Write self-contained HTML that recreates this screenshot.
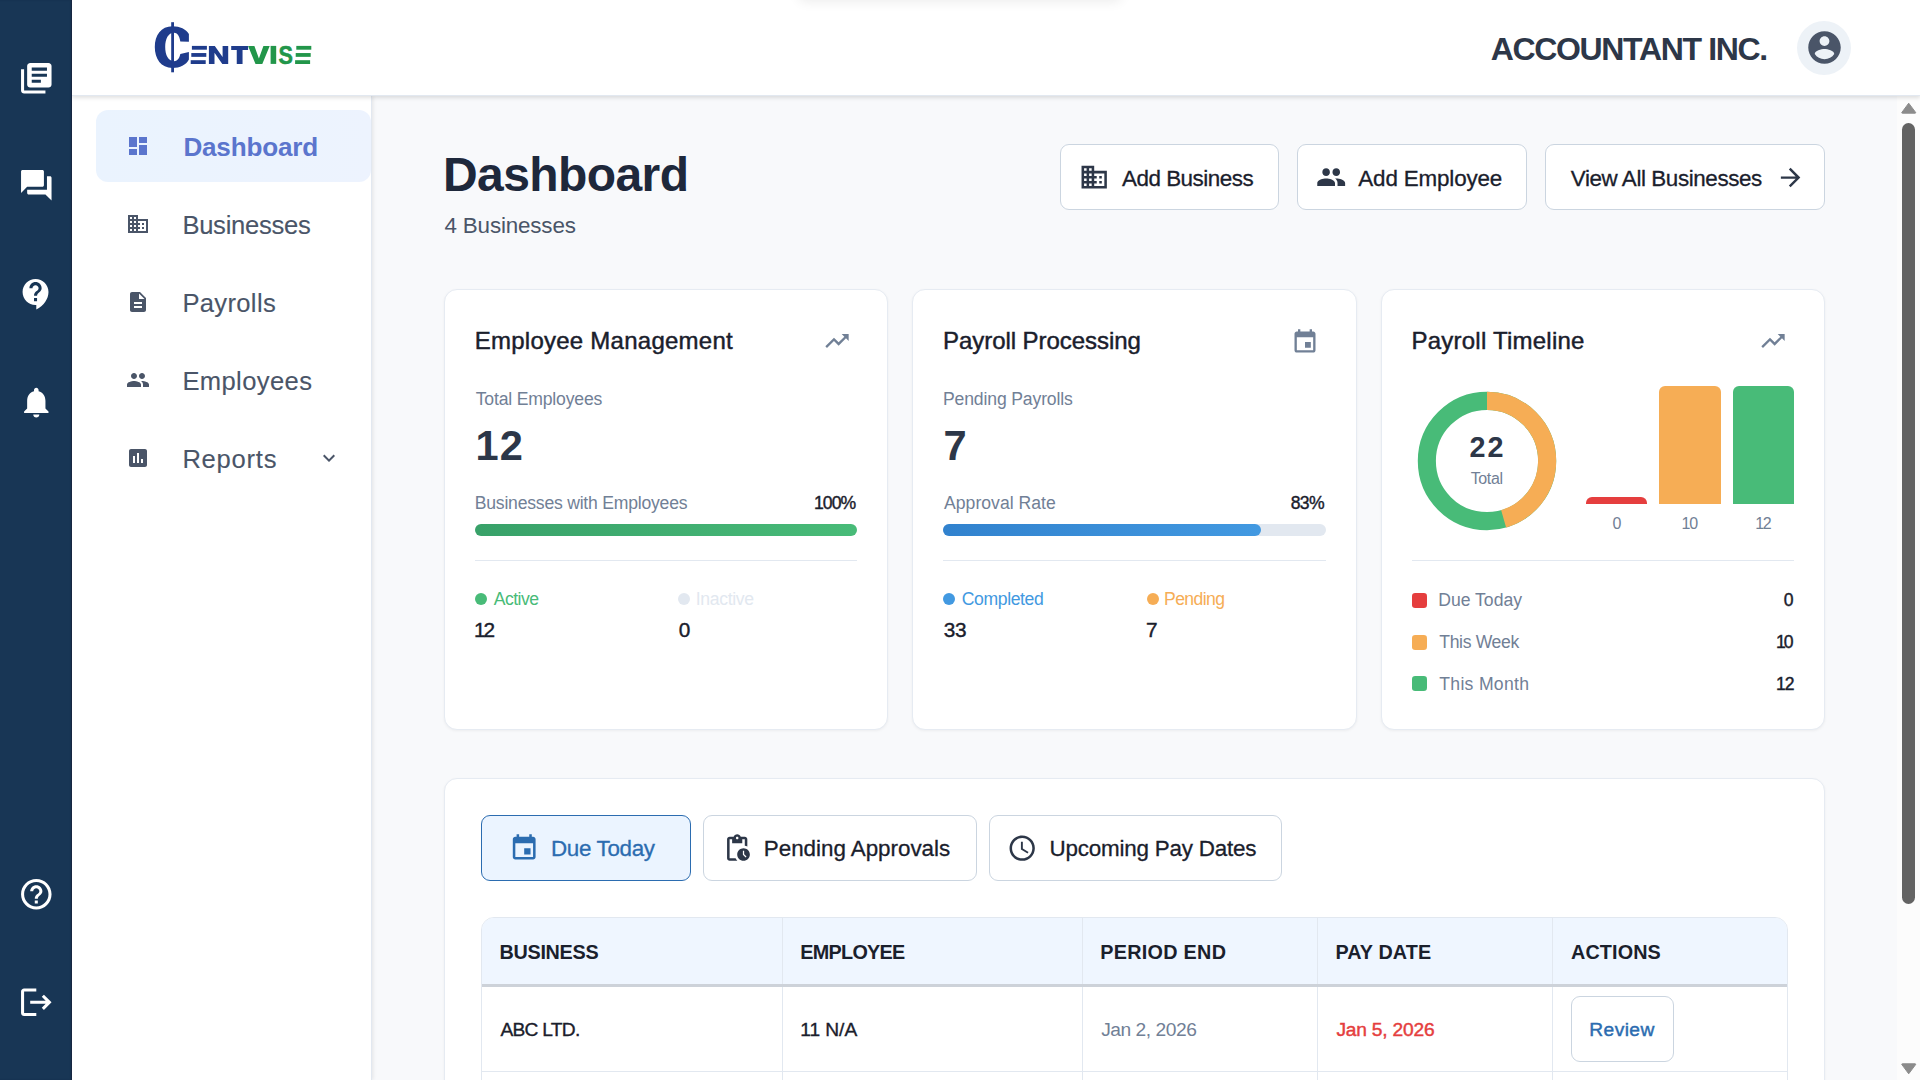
<!DOCTYPE html>
<html lang="en"><head><meta charset="utf-8"><title>Centvise Dashboard</title>
<style>
*{box-sizing:border-box;margin:0;padding:0}
html,body{width:1920px;height:1080px;overflow:hidden;background:#f8f9fb;font-family:"Liberation Sans",sans-serif}
.t{position:absolute;white-space:nowrap;line-height:1;display:block}
.i{position:absolute;display:block}
.abs{position:absolute}
#rail{position:absolute;left:0;top:0;width:72px;height:1080px;background:#183655;box-shadow:inset -1.5px 0 1.5px -0.5px rgba(20,14,30,.45);z-index:5}
#top{position:absolute;left:72px;top:0;width:1848px;height:96px;background:#fff;border-bottom:1px solid #e2e8f0;box-shadow:0 2px 4px rgba(0,0,0,.12);z-index:4}
#side{position:absolute;left:72px;top:96px;width:300px;height:984px;background:#fff;border-right:1px solid #e2e8f0;box-shadow:1px 0 4px rgba(0,0,0,.09);z-index:3}
#main{position:absolute;left:372px;top:96px;width:1525px;height:984px;background:#f8f9fb;z-index:1}
#sb{position:absolute;left:1897px;top:96px;width:23px;height:984px;background:#fcfcfc;z-index:2}
.navact{position:absolute;left:96px;top:110px;width:275px;height:72px;border-radius:12px;background:linear-gradient(90deg,#eaf3fe,#edf3fe)}
.btn{position:absolute;background:#fff;border:1px solid #cbd5e0;border-radius:9px}
.card{position:absolute;background:#fff;border:1px solid #e6ebf2;border-radius:13px;box-shadow:0 1px 3px rgba(0,0,0,.05)}
.hr{position:absolute;height:1px;background:#e2e8f0}
.dot{position:absolute;width:12px;height:12px;border-radius:50%}
.sq{position:absolute;width:15.2px;height:15.2px;border-radius:3.2px}
.bar{position:absolute;border-radius:6px}
</style></head>
<body>
<nav id="rail">
<svg class="i" style="left:17.70px;top:59.70px" width="36.6" height="36.6" viewBox="0 0 24 24" fill="#fff"><path d="M4 6H2v14c0 1.1.9 2 2 2h14v-2H4V6zm16-4H8c-1.1 0-2 .9-2 2v12c0 1.1.9 2 2 2h12c1.1 0 2-.9 2-2V4c0-1.1-.9-2-2-2zm-1 9H9V9h10v2zm-4 4H9v-2h6v2zm4-8H9V5h10v2z"/></svg>
<svg class="i" style="left:17.70px;top:167.45px" width="36.6" height="36.6" viewBox="0 0 24 24" fill="#fff"><path d="M21 6h-2v9H6v2c0 .55.45 1 1 1h11l4 4V7c0-.55-.45-1-1-1zm-4 6V3c0-.55-.45-1-1-1H3c-.55 0-1 .45-1 1v14l4-4h10c.55 0 1-.45 1-1z"/></svg>
<svg class="i" style="left:17.70px;top:275.70px" width="36.6" height="36.6" viewBox="0 0 24 24" fill="#fff"><path d="M11.5 2C6.81 2 3 5.81 3 10.5S6.81 19 11.5 19h.5v3c4.86-2.34 8-7 8-11.5C20 5.81 16.19 2 11.5 2zm1 14.5h-2v-2h2v2zm0-3.5h-2c0-3.25 3-3 3-5 0-1.1-.9-2-2-2s-2 .9-2 2h-2c0-2.21 1.79-4 4-4s4 1.79 4 4c0 2.5-3 2.75-3 5z"/></svg>
<svg class="i" style="left:17.70px;top:383.70px" width="36.6" height="36.6" viewBox="0 0 24 24" fill="#fff"><path d="M12 22c1.1 0 2-.9 2-2h-4c0 1.1.89 2 2 2zm6-6v-5c0-3.07-1.64-5.64-4.5-6.32V4c0-.83-.67-1.5-1.5-1.5s-1.5.67-1.5 1.5v.68C7.63 5.36 6 7.92 6 11v5l-2 2v1h16v-1l-2-2z"/></svg>
<svg class="i" style="left:17.70px;top:875.70px" width="36.6" height="36.6" viewBox="0 0 24 24" fill="#fff"><path d="M11 18h2v-2h-2v2zm1-16C6.48 2 2 6.48 2 12s4.48 10 10 10 10-4.48 10-10S17.52 2 12 2zm0 18c-4.41 0-8-3.59-8-8s3.59-8 8-8 8 3.59 8 8-3.59 8-8 8zm0-14c-2.21 0-4 1.79-4 4h2c0-1.1.9-2 2-2s2 .9 2 2c0 2-3 1.75-3 5h2c0-2.25 3-2.5 3-5 0-2.21-1.79-4-4-4z"/></svg>
<svg class="i" style="left:17.70px;top:983.70px" width="36.6" height="36.6" viewBox="0 0 24 24" fill="#fff"><path d="M17 7l-1.41 1.41L18.17 11H8v2h10.17l-2.58 2.58L17 17l5-5zM4 5h8V3H4c-1.1 0-2 .9-2 2v14c0 1.1.9 2 2 2h8v-2H4V5z"/></svg>
</nav>
<header id="top"></header>
<div class="abs" style="z-index:6;left:0;top:0">
<svg class="i" style="left:150px;top:18px" width="170" height="60" viewBox="0 0 170 60"><g transform="translate(-150,-18)"><path fill="#1f3c8c" d="M188.9 41.7L188.9 34C186 29 180 26.2 172.5 26.2C161 26.2 154.8 35 154.8 47.1C154.8 59 161 68 172.5 68C180 68 186 65 188.9 59.5L188.9 52L180.3 54C179.5 58.5 177.2 61.2 174 61.2C168.2 61.2 165.2 55 165.2 47.1C165.2 39 168.2 32.8 174 32.8C177.2 32.8 179.5 36 180.3 41.4Z"/></g><rect x="21.20" y="4.20" width="2.80" height="50.10" fill="#1f3c8c"/><rect x="41.90" y="27.90" width="15.00" height="3.80" fill="#1f3c8c"/><rect x="41.30" y="35.05" width="15.00" height="3.80" fill="#1f3c8c"/><rect x="40.70" y="42.20" width="15.00" height="3.80" fill="#1f3c8c"/><polygon fill="#1f3c8c" points="58.90,45.90 58.90,27.90 64.80,27.90 72.60,39.00 72.60,27.90 78.20,27.90 78.20,45.90 72.30,45.90 64.50,34.80 64.50,45.90"/><polygon fill="#1f3c8c" points="81.20,27.90 98.10,27.90 98.10,32.10 92.55,32.10 92.55,45.90 86.75,45.90 86.75,32.10 81.20,32.10"/><polygon fill="#22964a" points="98.10,27.90 104.40,27.90 108.90,40.60 113.40,27.90 119.70,27.90 112.30,45.90 105.50,45.90"/><polygon fill="#22964a" points="120.60,27.90 126.20,27.90 126.20,45.90 120.60,45.90"/><text transform="translate(128.60,45.90) scale(0.86,1)" font-family="Liberation Sans" font-weight="700" font-size="25.2" fill="#22964a" stroke="#22964a" stroke-width="0.5">S</text><rect x="146.30" y="27.90" width="15.00" height="3.80" fill="#22964a"/><rect x="145.70" y="35.05" width="15.00" height="3.80" fill="#22964a"/><rect x="145.10" y="42.20" width="15.00" height="3.80" fill="#22964a"/></svg>
<span class="t" style="left:1490.75px;top:32.71px;font-size:32px;color:#2d3748;font-weight:700;letter-spacing:-1.348px;">ACCOUNTANT INC.</span>
<div class="abs" style="left:1797px;top:21px;width:54px;height:54px;border-radius:50%;background:#edf2f7"></div>
<svg class="i" style="left:1804.80px;top:28.40px" width="39" height="39" viewBox="0 0 24 24" fill="#4a5568"><path d="M12 2C6.48 2 2 6.48 2 12s4.48 10 10 10 10-4.48 10-10S17.52 2 12 2zm0 3c1.66 0 3 1.34 3 3s-1.34 3-3 3-3-1.34-3-3 1.34-3 3-3zm0 14.2c-2.5 0-4.71-1.28-6-3.22.03-1.99 4-3.08 6-3.08 1.99 0 5.97 1.09 6 3.08-1.29 1.94-3.5 3.22-6 3.22z"/></svg>
</div>
<aside id="side"></aside>
<div class="abs" style="z-index:6;left:0;top:0">
<div class="navact"></div>
<svg class="i" style="left:126.00px;top:134.00px" width="24" height="24" viewBox="0 0 24 24" fill="#5b75cd"><path d="M3 13h8V3H3v10zm0 8h8v-6H3v6zm10 0h8V11h-8v10zm0-18v6h8V3h-8z"/></svg>
<span class="t" style="left:183.40px;top:133.61px;font-size:26.1px;color:#5b75cd;font-weight:700;letter-spacing:-0.194px;">Dashboard</span>
<svg class="i" style="left:126.00px;top:212.00px" width="24" height="24" viewBox="0 0 24 24" fill="#4a5568"><path d="M12 7V3H2v18h20V7H12zM6 19H4v-2h2v2zm0-4H4v-2h2v2zm0-4H4V9h2v2zm0-4H4V5h2v2zm4 12H8v-2h2v2zm0-4H8v-2h2v2zm0-4H8V9h2v2zm0-4H8V5h2v2zm10 12h-8v-2h2v-2h-2v-2h2v-2h-2V9h8v10zm-2-8h-2v2h2v-2zm0 4h-2v2h2v-2z"/></svg>
<span class="t" style="left:182.40px;top:212.53px;font-size:25.6px;color:#4a5568;letter-spacing:-0.287px;-webkit-text-stroke:0.12px #4a5568;">Businesses</span>
<svg class="i" style="left:126.00px;top:290.00px" width="24" height="24" viewBox="0 0 24 24" fill="#4a5568"><path d="M14 2H6c-1.1 0-1.99.9-1.99 2L4 20c0 1.1.89 2 1.99 2H18c1.1 0 2-.9 2-2V8l-6-6zm2 16H8v-2h8v2zm0-4H8v-2h8v2zm-3-5V3.5L18.5 9H13z"/></svg>
<span class="t" style="left:182.40px;top:290.53px;font-size:25.6px;color:#4a5568;letter-spacing:0.324px;-webkit-text-stroke:0.12px #4a5568;">Payrolls</span>
<svg class="i" style="left:126.00px;top:368.00px" width="24" height="24" viewBox="0 0 24 24" fill="#4a5568"><path d="M16 11c1.66 0 2.99-1.34 2.99-3S17.66 5 16 5c-1.66 0-3 1.34-3 3s1.34 3 3 3zm-8 0c1.66 0 2.99-1.34 2.99-3S9.66 5 8 5C6.34 5 5 6.34 5 8s1.34 3 3 3zm0 2c-2.33 0-7 1.17-7 3.5V19h14v-2.5c0-2.33-4.67-3.5-7-3.5zm8 0c-.29 0-.62.02-.97.05 1.16.84 1.97 1.97 1.97 3.45V19h6v-2.5c0-2.33-4.67-3.5-7-3.5z"/></svg>
<span class="t" style="left:182.40px;top:368.53px;font-size:25.6px;color:#4a5568;letter-spacing:0.368px;-webkit-text-stroke:0.12px #4a5568;">Employees</span>
<svg class="i" style="left:126.00px;top:446.00px" width="24" height="24" viewBox="0 0 24 24" fill="#4a5568"><path d="M19 3H5c-1.1 0-2 .9-2 2v14c0 1.1.9 2 2 2h14c1.1 0 2-.9 2-2V5c0-1.1-.9-2-2-2zM9 17H7v-7h2v7zm4 0h-2V7h2v10zm4 0h-2v-4h2v4z"/></svg>
<span class="t" style="left:182.40px;top:446.53px;font-size:25.6px;color:#4a5568;letter-spacing:0.739px;-webkit-text-stroke:0.12px #4a5568;">Reports</span>
<svg class="i" style="left:317.00px;top:446.00px" width="24" height="24" viewBox="0 0 24 24" fill="#4a5568"><path d="M16.59 8.59L12 13.17 7.41 8.59 6 10l6 6 6-6z"/></svg>
</div>
<main id="main"></main>
<div class="abs" style="left:0;top:0;z-index:2">
<span class="t" style="left:443.00px;top:150.77px;font-size:48px;color:#1e283b;font-weight:700;letter-spacing:-0.586px;">Dashboard</span>
<span class="t" style="left:444.50px;top:215.04px;font-size:22.4px;color:#4a5568;letter-spacing:-0.162px;">4 Businesses</span>
<div class="btn" style="left:1060px;top:144px;width:219px;height:66px"></div>
<svg class="i" style="left:1078.60px;top:161.80px" width="30.4" height="30.4" viewBox="0 0 24 24" fill="#2d3748"><path d="M12 7V3H2v18h20V7H12zM6 19H4v-2h2v2zm0-4H4v-2h2v2zm0-4H4V9h2v2zm0-4H4V5h2v2zm4 12H8v-2h2v2zm0-4H8v-2h2v2zm0-4H8V9h2v2zm0-4H8V5h2v2zm10 12h-8v-2h2v-2h-2v-2h2v-2h-2V9h8v10zm-2-8h-2v2h2v-2zm0 4h-2v2h2v-2z"/></svg>
<span class="t" style="left:1122.00px;top:167.94px;font-size:22.4px;color:#1a202c;letter-spacing:-0.483px;-webkit-text-stroke:0.3px #1a202c;">Add Business</span>
<div class="btn" style="left:1297px;top:144px;width:230px;height:66px"></div>
<svg class="i" style="left:1315.80px;top:161.80px" width="30.4" height="30.4" viewBox="0 0 24 24" fill="#2d3748"><path d="M16 11c1.66 0 2.99-1.34 2.99-3S17.66 5 16 5c-1.66 0-3 1.34-3 3s1.34 3 3 3zm-8 0c1.66 0 2.99-1.34 2.99-3S9.66 5 8 5C6.34 5 5 6.34 5 8s1.34 3 3 3zm0 2c-2.33 0-7 1.17-7 3.5V19h14v-2.5c0-2.33-4.67-3.5-7-3.5zm8 0c-.29 0-.62.02-.97.05 1.16.84 1.97 1.97 1.97 3.45V19h6v-2.5c0-2.33-4.67-3.5-7-3.5z"/></svg>
<span class="t" style="left:1358.30px;top:167.94px;font-size:22.4px;color:#1a202c;letter-spacing:-0.152px;-webkit-text-stroke:0.3px #1a202c;">Add Employee</span>
<div class="btn" style="left:1545px;top:144px;width:280px;height:66px"></div>
<span class="t" style="left:1570.75px;top:167.94px;font-size:22.4px;color:#1a202c;letter-spacing:-0.403px;-webkit-text-stroke:0.3px #1a202c;">View All Businesses</span>
<svg class="i" style="left:1776.40px;top:162.65px" width="29.2" height="29.2" viewBox="0 0 24 24" fill="#2d3748"><path d="M12 4l-1.41 1.41L16.17 11H4v2h12.17l-5.58 5.59L12 20l8-8z"/></svg>
<section class="card" style="left:444px;top:289px;width:444px;height:441px"></section>
<span class="t" style="left:474.75px;top:329.13px;font-size:24px;color:#1a202c;letter-spacing:0.247px;-webkit-text-stroke:0.45px #1a202c;">Employee Management</span>
<svg class="i" style="left:822.50px;top:327.20px" width="28" height="28" viewBox="0 0 24 24" fill="#718096"><path d="M16 6l2.29 2.29-4.88 4.88-4-4L2 16.59 3.41 18l6-6 4 4 6.3-6.29L22 12V6z"/></svg>
<span class="t" style="left:475.75px;top:390.80px;font-size:17.6px;color:#718096;letter-spacing:-0.181px;">Total Employees</span>
<span class="t" style="left:475.50px;top:424.99px;font-size:41.6px;color:#2d3748;font-weight:700;letter-spacing:1.118px;">12</span>
<span class="t" style="left:474.75px;top:494.55px;font-size:17.6px;color:#718096;letter-spacing:-0.220px;">Businesses with Employees</span>
<span class="t" style="left:814.00px;top:494.55px;font-size:17.6px;color:#1a202c;letter-spacing:-0.951px;-webkit-text-stroke:0.4px #1a202c;">100%</span>
<div class="abs" style="left:475px;top:524px;width:382px;height:12px;border-radius:6px;background:linear-gradient(90deg,#38a169,#48bb78)"></div>
<div class="hr" style="left:475px;top:560px;width:382px"></div>
<div class="dot" style="left:475px;top:593px;background:#48bb78"></div>
<span class="t" style="left:493.75px;top:590.80px;font-size:17.6px;color:#48bb78;letter-spacing:-0.525px;">Active</span>
<span class="t" style="left:474.00px;top:619.84px;font-size:20.8px;color:#1a202c;letter-spacing:-2.000px;-webkit-text-stroke:0.4px #1a202c;">12</span>
<div class="dot" style="left:678px;top:593px;background:#e2e8f0"></div>
<span class="t" style="left:695.75px;top:590.80px;font-size:17.6px;color:#e2e8f0;letter-spacing:-0.335px;">Inactive</span>
<span class="t" style="left:678.75px;top:619.84px;font-size:20.8px;color:#1a202c;-webkit-text-stroke:0.4px #1a202c;">0</span>
<section class="card" style="left:912px;top:289px;width:445px;height:441px"></section>
<span class="t" style="left:943.00px;top:329.13px;font-size:24px;color:#1a202c;letter-spacing:-0.053px;-webkit-text-stroke:0.45px #1a202c;">Payroll Processing</span>
<svg class="i" style="left:1290.75px;top:327.60px" width="28" height="28" viewBox="0 0 24 24" fill="#718096"><path d="M17 12h-5v5h5v-5zM16 1v2H8V1H6v2H5c-1.11 0-1.99.9-1.99 2L3 19c0 1.1.89 2 2 2h14c1.1 0 2-.9 2-2V5c0-1.1-.9-2-2-2h-1V1h-2zm3 18H5V8h14v11z"/></svg>
<span class="t" style="left:943.00px;top:390.80px;font-size:17.6px;color:#718096;letter-spacing:-0.149px;">Pending Payrolls</span>
<span class="t" style="left:943.50px;top:424.99px;font-size:41.6px;color:#2d3748;font-weight:700;">7</span>
<span class="t" style="left:944.00px;top:494.55px;font-size:17.6px;color:#718096;letter-spacing:0.025px;">Approval Rate</span>
<span class="t" style="left:1290.75px;top:494.55px;font-size:17.6px;color:#1a202c;letter-spacing:-0.660px;-webkit-text-stroke:0.4px #1a202c;">83%</span>
<div class="abs" style="left:943px;top:524px;width:383px;height:12px;border-radius:6px;background:#e2e8f0"></div>
<div class="abs" style="left:943px;top:524px;width:318px;height:12px;border-radius:6px;background:linear-gradient(90deg,#3182ce,#4299e1)"></div>
<div class="hr" style="left:943px;top:560px;width:383px"></div>
<div class="dot" style="left:943px;top:593px;background:#4299e1"></div>
<span class="t" style="left:961.75px;top:590.80px;font-size:17.6px;color:#4299e1;letter-spacing:-0.381px;">Completed</span>
<span class="t" style="left:943.75px;top:619.84px;font-size:20.8px;color:#1a202c;letter-spacing:-0.316px;-webkit-text-stroke:0.4px #1a202c;">33</span>
<div class="dot" style="left:1147px;top:593px;background:#f6ad55"></div>
<span class="t" style="left:1164.00px;top:590.80px;font-size:17.6px;color:#f6ad55;letter-spacing:-0.589px;">Pending</span>
<span class="t" style="left:1146.00px;top:619.84px;font-size:20.8px;color:#1a202c;-webkit-text-stroke:0.4px #1a202c;">7</span>
<section class="card" style="left:1381px;top:289px;width:444px;height:441px"></section>
<span class="t" style="left:1411.50px;top:329.13px;font-size:24px;color:#1a202c;letter-spacing:0.235px;-webkit-text-stroke:0.45px #1a202c;">Payroll Timeline</span>
<svg class="i" style="left:1758.75px;top:327.20px" width="28" height="28" viewBox="0 0 24 24" fill="#718096"><path d="M16 6l2.29 2.29-4.88 4.88-4-4L2 16.59 3.41 18l6-6 4 4 6.3-6.29L22 12V6z"/></svg>
<svg class="i" style="left:1416.90px;top:390.90px" width="140" height="140" viewBox="0 0 140 140"><circle cx="70" cy="70" r="60.15" fill="none" stroke="#48bb78" stroke-width="18.1"/><circle cx="70" cy="70" r="60.15" fill="none" stroke="#f6ad55" stroke-width="18.1" stroke-dasharray="171.79 377.93" transform="rotate(-90 70 70)"/></svg>
<span class="t" style="left:1469.49px;top:433.07px;font-size:28.8px;color:#2d3748;font-weight:700;letter-spacing:2.000px;">22</span>
<span class="t" style="left:1470.72px;top:471.41px;font-size:16px;color:#718096;letter-spacing:-0.373px;">Total</span>
<div class="bar" style="left:1586.25px;top:497px;width:60.75px;height:7px;background:#e53e3e;border-radius:6px 6px 0 0"></div>
<div class="bar" style="left:1659.25px;top:386px;width:61.5px;height:118px;background:#f6ad55;border-radius:6px 6px 0 0"></div>
<div class="bar" style="left:1733px;top:386px;width:61px;height:118px;background:#48bb78;border-radius:6px 6px 0 0"></div>
<span class="t" style="left:1612.40px;top:515.91px;font-size:16px;color:#718096;">0</span>
<span class="t" style="left:1681.53px;top:515.91px;font-size:16px;color:#718096;letter-spacing:-1.148px;">10</span>
<span class="t" style="left:1755.25px;top:515.91px;font-size:16px;color:#718096;letter-spacing:-1.398px;">12</span>
<div class="hr" style="left:1412px;top:560px;width:382px"></div>
<div class="sq" style="left:1412px;top:592.5px;background:#e53e3e"></div>
<span class="t" style="left:1438.25px;top:592.05px;font-size:17.6px;color:#718096;letter-spacing:-0.008px;">Due Today</span>
<span class="t" style="left:1783.75px;top:592.05px;font-size:17.6px;color:#1a202c;-webkit-text-stroke:0.4px #1a202c;">0</span>
<div class="sq" style="left:1412px;top:635.0px;background:#f6ad55"></div>
<span class="t" style="left:1439.25px;top:634.05px;font-size:17.6px;color:#718096;letter-spacing:-0.342px;">This Week</span>
<span class="t" style="left:1775.97px;top:634.05px;font-size:17.6px;color:#1a202c;letter-spacing:-2.000px;-webkit-text-stroke:0.4px #1a202c;">10</span>
<div class="sq" style="left:1412px;top:676.2px;background:#48bb78"></div>
<span class="t" style="left:1439.25px;top:676.05px;font-size:17.6px;color:#718096;letter-spacing:0.307px;">This Month</span>
<span class="t" style="left:1776.00px;top:676.05px;font-size:17.6px;color:#1a202c;letter-spacing:-1.035px;-webkit-text-stroke:0.4px #1a202c;">12</span>
<section class="card" style="left:444px;top:778px;width:1381px;height:340px"></section>
<div class="btn" style="left:481px;top:815px;width:210px;height:66px;background:#ebf4ff;border-color:#2b6cb0"></div>
<svg class="i" style="left:508.90px;top:832.80px" width="30.4" height="30.4" viewBox="0 0 24 24" fill="#2b6cb0"><path d="M17 12h-5v5h5v-5zM16 1v2H8V1H6v2H5c-1.11 0-1.99.9-1.99 2L3 19c0 1.1.89 2 2 2h14c1.1 0 2-.9 2-2V5c0-1.1-.9-2-2-2h-1V1h-2zm3 18H5V8h14v11z"/></svg>
<span class="t" style="left:551.00px;top:837.94px;font-size:22.4px;color:#2b6cb0;letter-spacing:-0.331px;-webkit-text-stroke:0.3px #2b6cb0;">Due Today</span>
<div class="btn" style="left:703px;top:815px;width:274px;height:66px"></div>
<svg class="i" style="left:721.70px;top:832.80px" width="30.4" height="30.4" viewBox="0 0 24 24" fill="#2d3748"><path d="M17 12c-2.76 0-5 2.24-5 5s2.24 5 5 5 5-2.24 5-5-2.24-5-5-5zm1.65 7.35L16.5 17.2V14h1v2.79l1.85 1.85-.7.71zM18 3h-3.18C14.4 1.84 13.3 1 12 1s-2.4.84-2.82 2H6c-1.1 0-2 .9-2 2v15c0 1.1.9 2 2 2h6.11c-.59-.57-1.07-1.25-1.42-2H6V5h2v3h8V5h2v5.08c.71.1 1.38.31 2 .6V5c0-1.1-.9-2-2-2zm-6 2c-.55 0-1-.45-1-1s.45-1 1-1 1 .45 1 1-.45 1-1 1z"/></svg>
<span class="t" style="left:763.80px;top:837.94px;font-size:22.4px;color:#1a202c;letter-spacing:-0.023px;-webkit-text-stroke:0.3px #1a202c;">Pending Approvals</span>
<div class="btn" style="left:989px;top:815px;width:293px;height:66px"></div>
<svg class="i" style="left:1007.40px;top:832.80px" width="30.4" height="30.4" viewBox="0 0 24 24" fill="#2d3748"><path d="M11.99 2C6.47 2 2 6.48 2 12s4.47 10 9.99 10C17.52 22 22 17.52 22 12S17.52 2 11.99 2zM12 20c-4.42 0-8-3.58-8-8s3.58-8 8-8 8 3.58 8 8-3.58 8-8 8zm.5-13H11v6l5.25 3.15.75-1.23-4.5-2.67z"/></svg>
<span class="t" style="left:1049.50px;top:837.94px;font-size:22.4px;color:#1a202c;letter-spacing:-0.201px;-webkit-text-stroke:0.3px #1a202c;">Upcoming Pay Dates</span>
<div class="abs" style="left:481px;top:917px;width:1307px;height:200px;border:1px solid #e2e8f0;border-radius:13px 13px 0 0;background:#fff;overflow:hidden"><div class="abs" style="left:0;top:0;width:1307px;height:66px;background:#eff6ff"></div><div class="abs" style="left:0;top:153px;width:1307px;height:1px;background:#e2e8f0"></div><div class="abs" style="left:300px;top:0;width:1px;height:200px;background:#e2e8f0"></div><div class="abs" style="left:600px;top:0;width:1px;height:200px;background:#e2e8f0"></div><div class="abs" style="left:835px;top:0;width:1px;height:200px;background:#e2e8f0"></div><div class="abs" style="left:1070px;top:0;width:1px;height:200px;background:#e2e8f0"></div><div class="abs" style="left:0;top:66px;width:1307px;height:3px;background:#cdd2d9"></div></div>
<span class="t" style="left:499.50px;top:943.24px;font-size:19.8px;color:#1a202c;font-weight:700;letter-spacing:-0.291px;">BUSINESS</span>
<span class="t" style="left:800.20px;top:943.24px;font-size:19.8px;color:#1a202c;font-weight:700;letter-spacing:-0.689px;">EMPLOYEE</span>
<span class="t" style="left:1100.20px;top:943.24px;font-size:19.8px;color:#1a202c;font-weight:700;letter-spacing:0.298px;">PERIOD END</span>
<span class="t" style="left:1335.40px;top:943.24px;font-size:19.8px;color:#1a202c;font-weight:700;letter-spacing:0.133px;">PAY DATE</span>
<span class="t" style="left:1571.00px;top:943.24px;font-size:19.8px;color:#1a202c;font-weight:700;letter-spacing:0.130px;">ACTIONS</span>
<span class="t" style="left:500.50px;top:1019.75px;font-size:19.2px;color:#1a202c;letter-spacing:-0.744px;-webkit-text-stroke:0.35px #1a202c;">ABC LTD.</span>
<span class="t" style="left:800.20px;top:1019.75px;font-size:19.2px;color:#1a202c;letter-spacing:-0.047px;-webkit-text-stroke:0.35px #1a202c;">11 N/A</span>
<span class="t" style="left:1101.20px;top:1019.75px;font-size:19.2px;color:#718096;letter-spacing:-0.461px;">Jan 2, 2026</span>
<span class="t" style="left:1336.40px;top:1019.75px;font-size:19.2px;color:#e53e3e;letter-spacing:-0.201px;-webkit-text-stroke:0.45px #e53e3e;">Jan 5, 2026</span>
<div class="btn" style="left:1571px;top:996px;width:103px;height:66px"></div>
<span class="t" style="left:1589.30px;top:1020.05px;font-size:19.2px;color:#2b6cb0;letter-spacing:0.409px;-webkit-text-stroke:0.45px #2b6cb0;">Review</span>
</div>
<div class="abs" style="z-index:7;left:798px;top:-40px;width:324px;height:40px;border-radius:8px;box-shadow:0 2px 12px rgba(0,0,0,.075)"></div><div id="sb"></div><div class="abs" style="z-index:3;left:1902px;top:123px;width:13px;height:781px;border-radius:6.5px;background:#636363"></div><svg class="i" style="z-index:3;left:1900px;top:101px" width="18" height="14" viewBox="0 0 18 14"><path d="M8.7 2.2 L15.6 11.4 Q16 12.2 15 12.2 L2.4 12.2 Q1.4 12.2 1.9 11.4 Z" fill="#8b8b8b" stroke="#8b8b8b" stroke-width="1" stroke-linejoin="round"/></svg><svg class="i" style="z-index:3;left:1900px;top:1062px" width="18" height="14" viewBox="0 0 18 14"><path d="M8.7 11.8 L15.6 2.6 Q16 1.8 15 1.8 L2.4 1.8 Q1.4 1.8 1.9 2.6 Z" fill="#8b8b8b" stroke="#8b8b8b" stroke-width="1" stroke-linejoin="round"/></svg>
</body></html>
